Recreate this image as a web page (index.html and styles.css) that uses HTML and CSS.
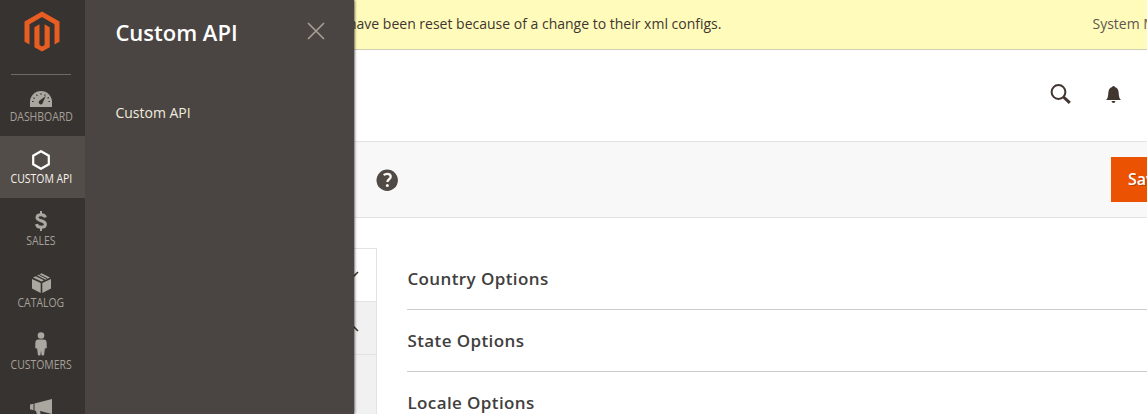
FILE: index.html
```html
<!DOCTYPE html>
<html lang="en">
<head>
<meta charset="utf-8">
<title>Configuration</title>
<link rel="stylesheet" href="styles.css">
</head>
<body>
<div class="app">
  <nav class="menu">
    <a class="logo"><svg width="36" height="41" viewBox="0 0 36 41"><path fill="#e85d22" d="M18 .5 35.500 10.500V30.700l-5 2.800V13.300L18 6.100 5.500 13.300V33.500L.5 30.700V10.500z"/><path fill="#e85d22" d="M10.400 16.200l5.100-3V34.100L18 35.600l2.600-1.500V13.200l5.100 3V36.200L18 40.500l-7.600-4.300z"/></svg></a>
    <a class="item"><svg class="icon gauge" width="22" height="16" viewBox="0 0 22 16"><path fill="#aaa6a0" d="M0 16V11a11 11 0 0 1 22 0v5z"/><g fill="none" stroke="#373330" stroke-width="1.100"><path d="M2 10.500h1.600M3.300 6.700l1.500.9M6.500 3.600l.8 1.400M11 2.200v1.500M15.300 3.500l-.7 1.200M18.400 10.500H20M17.500 7.300l1.400-.7"/></g><path fill="#373330" d="M15.800 5l-2.900 6.500a2.100 2.100 0 1 1-3.200-2z"/></svg><span>DASHBOARD</span></a>
    <a class="item active"><svg class="icon hex" width="18" height="20" viewBox="0 0 18 20"><path fill="none" stroke="#fff" stroke-width="2.200" d="M9 1.200l7.800 4.500v8.600L9 18.800l-7.800-4.500V5.700z"/></svg><span>CUSTOM API</span></a>
    <a class="item"><svg class="icon dollar" width="12" height="20" viewBox="0 0 12 20"><path fill="none" stroke="#aaa6a0" stroke-width="3" d="M10.300 6.600C10 4.800 8.500 3.700 6.100 3.700c-2.500 0-4.100 1.100-4.100 2.900C2 10.800 10.400 8.700 10.400 13.200c0 1.900-1.700 3.100-4.300 3.100-2.700 0-4.300-1.200-4.500-3.300"/><path stroke="#aaa6a0" stroke-width="2" d="M6 0v3.500M6 16.500V20"/></svg><span>SALES</span></a>
    <a class="item"><svg class="icon box" width="19" height="20" viewBox="0 0 19 20"><g fill="#aaa6a0"><path d="M0 6l8.700 4.100V20L0 15.500z"/><path d="M19 6l-8.700 4.100V20l8.700-4.500z"/><path d="M1 4.600l2.700-1.300 8.200 4L9.500 8.600z"/><path d="M5.200 2.500L9.500.3l8.500 4.300-4.400 2.100z"/></g><path stroke="#373330" stroke-width="1" d="M7 1.500l8.500 4.300"/></svg><span>CATALOG</span></a>
    <a class="item"><svg class="icon person" width="12" height="24" viewBox="0 0 12 24"><g fill="#aaa6a0"><circle cx="6" cy="3.500" r="3.300"/><path d="M3 7.500h6q2.500 0 2.600 2.500l.2 5.500q-.2 1.200-1.200 1l-.7-.2-.8 6.500q-.1.700-.9.700H7.200q-.6 0-.7-.7L6 18.500l-.5 4.300q-.1.700-.7.700H3.800q-.8 0-.9-.7l-.8-6.500-.7.200q-1 .2-1.200-1L.4 10Q.5 7.500 3 7.500z"/></g></svg><span>CUSTOMERS</span></a>
    <a class="item"><svg class="icon horn" width="22" height="20" viewBox="0 0 22 20"><g fill="#aaa6a0"><path d="M0 5.500l3.500-.8v6.500L0 10.300z"/><path d="M4.500 4.500L22 0v15l-12-3 1.500 7H8l-2-7-1.500-.5z"/></g></svg><span>MARKETING</span></a>
  </nav>
  <aside class="submenu">
    <header class="subhead"><h2>Custom API</h2><svg width="18" height="18" viewBox="0 0 18 18"><path d="M1 1l16 16M17 1L1 17" stroke="#a79d95" stroke-width="1.700"/></svg></header>
    <a class="sublink">Custom API</a>
  </aside>
  <main class="page">
    <div class="notice"><span>have been reset because of a change to their xml configs.</span><a>System Messages: 1</a></div>
    <header class="header">
      <svg width="21" height="20" viewBox="0 0 21 20"><circle cx="8.500" cy="8" r="6.900" fill="none" stroke="#41362f" stroke-width="2"/><path d="M13.500 13l6.300 5.900" stroke="#41362f" stroke-width="3"/></svg>
      <svg class="bell" width="15" height="17" viewBox="0 0 15 17"><path fill="#41362f" d="M0 14q2.200-1.600 2.300-7Q2.500 1.800 6.200 1 6.300 0 7.500 0t1.300 1q3.700.8 3.900 6 .1 5.400 2.300 7zM5.500 15h4q-.3 2-2 2t-2-2z"/></svg>
    </header>
    <div class="toolbar">
      <svg class="help" width="22" height="22" viewBox="0 0 22 22"><circle cx="11.200" cy="11.300" r="10.700" fill="#514943"/><path fill="none" stroke="#f8f8f8" stroke-width="2.300" d="M7.700 6.200Q9.200 4.900 11.200 4.900c2.200 0 3.500 1.100 3.500 2.800 0 2.500-3.300 2.600-3.300 5.200"/><circle cx="11.300" cy="16.400" r="1.500" fill="#f8f8f8"/></svg>
      <button class="save">Save Config</button>
    </div>
    <div class="content">
      <div class="tabs">
        <div class="tab"><svg width="14" height="8" viewBox="0 0 14 8"><path d="M1 7l6-6 6 6" transform="matrix(1 0 0 -1 0 8)"/></svg></div>
        <div class="tab open"><svg width="14" height="8" viewBox="0 0 14 8"><path d="M1 1l6-6 6 6" transform="translate(0 6)"/></svg></div>
        <div class="tabbody"></div>
      </div>
      <div class="sections"><h3>Country Options</h3><h3>State Options</h3><h3>Locale Options</h3></div>
    </div>
  </main>
</div>
</body>
</html>
```
FILE: styles.css
```css
* { box-sizing: border-box; }
body { margin: 0; font-family: "Open Sans", sans-serif; font-size: 14px; color: #41362f; background: #fff; overflow: hidden; }
h2, h3 { margin: 0; }
svg { display: block; flex: none; }
.app { position: relative; display: flex; height: 414px; overflow: hidden; }
.menu { width: 85px; flex: none; background: #373330; }
.logo { display: flex; justify-content: center; height: 75px; margin: 0 14px 0 11px; padding: 11px 0 0 2px; border-bottom: 1px solid #736963; }
.item { display: flex; flex-direction: column; align-items: center; height: 62px; padding: 10px 3px 0 0; color: #a6a099; line-height: 16px; white-space: nowrap; }
.item:nth-child(2) { height: 61px; padding-top: 9px; }
.item .icon { height: 24px; margin-bottom: 1px; }
.item span { font-size: 12px; transform: scaleX(.87); }
.item .gauge { height: 16px; margin: 7px 0 2px; }
.item .hex { height: 20px; margin: 4px 0 1px; }
.item .dollar { height: 20px; margin: 3px 0 2px; }
.item .box { height: 20px; margin: 3px 0 2px; }
.item .person { height: 24px; margin: 0 0 1px; }
.item .horn { height: 20px; margin: 5px 0 8px; }
.active { background: #524d49; color: #f7f3eb; }
.submenu { position: absolute; left: 85px; top: 0; width: 268.500px; height: 414px; padding: 0 29px 0 30.400px; background: #4a4542; box-shadow: 0 0 3px #000; clip-path: inset(0 -5px 0 0); color: #f2ebde; }
.subhead { display: flex; justify-content: space-between; padding-top: 16px; height: 103px; }
.subhead h2 { color: #fff; font-size: 22px; line-height: 32px; font-weight: 600; }
.subhead svg { margin-top: 6px; }
.sublink { display: block; line-height: 20px; }
.page { flex: none; width: 1062px; }
.notice { display: flex; justify-content: space-between; height: 50px; padding-left: 263px; background: #fffbbb; border-bottom: 1px solid #cfcdb5; line-height: 48px; white-space: nowrap; overflow: hidden; }
.notice a { width: 54.500px; overflow: visible; color: #5f564f; }
.header { display: flex; justify-content: flex-end; height: 92px; padding: 34px 26px 0 0; gap: 35px; border-bottom: 1px solid #e3e3e3; }
.bell { margin-top: 2px; }
.toolbar { display: flex; justify-content: space-between; height: 76px; padding: 15px 0 0 291px; background: #f8f8f8; border-bottom: 1px solid #e3e3e3; overflow: hidden; }
.help { margin-top: 12px; }
.save { width: 135px; height: 45px; margin-right: -99px; padding: 0 0 2px 16px; flex: none; text-align: left; background: #eb5202; border: 1px solid #eb5202; color: #fff; font: 600 16px "Open Sans", sans-serif; text-shadow: 1px 1px 0 rgba(0,0,0,.25); }
.content { display: flex; gap: 30px; padding-top: 30px; }
.tabs { width: 292px; flex: none; border: 1px solid #e3e3e3; }
.tab { display: flex; justify-content: flex-end; height: 53px; padding: 22px 17px 0 0; border-bottom: 1px solid #e3e3e3; }
.tab path { fill: none; stroke: #41362f; stroke-width: 1.600; }
.open, .tabbody { background: #f1f1f1; }
.tabbody { height: 120px; }
.sections { flex: 1; }
.sections h3 { height: 62px; padding-left: .4px; line-height: 62px; font-size: 17px; font-weight: 600; letter-spacing: .4px; color: #41403e; border-bottom: 1px solid #ccc; }
```
